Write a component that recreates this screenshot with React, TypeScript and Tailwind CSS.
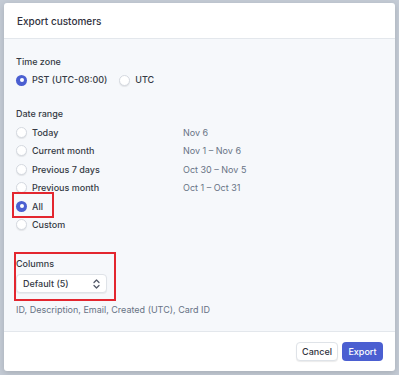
import React from 'react';

const rows = [
  { label: 'Today', range: 'Nov 6' },
  { label: 'Current month', range: 'Nov 1 – Nov 6' },
  { label: 'Previous 7 days', range: 'Oct 30 – Nov 5' },
  { label: 'Previous month', range: 'Oct 1 – Oct 31' },
  { label: 'All', range: '', checked: true, marked: true },
  { label: 'Custom', range: '' },
];

function Radio({ checked }: { checked?: boolean }) {
  return checked ? (
    <span className="block w-[11px] h-[11px] rounded-full bg-[#4b5fd1] flex items-center justify-center shrink-0">
      <span className="block w-[4px] h-[4px] rounded-full bg-white" />
    </span>
  ) : (
    <span className="block w-[11px] h-[11px] rounded-full bg-white border border-[#d5d9e0] shadow-[0_1px_1px_rgba(0,0,0,0.08)] shrink-0" />
  );
}

export default function App() {
  return (
    <div className="w-[399px] h-[375px] bg-[#c4cbd5] pt-[3px] pl-[4px] font-['Inter',sans-serif] text-[#353a44]">
      <div className="w-[391px] h-[368px] bg-white rounded-[3px] overflow-hidden flex flex-col shadow-[0_2px_6px_rgba(0,0,0,0.15)]">
        <div className="h-[36px] shrink-0 flex items-center px-[13px] pt-[2px] border-b border-[#e3e7ec]">
          <h1 className="text-[10px] font-medium text-[#30313d]">Export customers</h1>
        </div>

        <div className="h-[293px] shrink-0 bg-[#f6f8fb] px-[12px] pt-[16px] text-[9px] border-b border-[#e3e7ec]">
          <div className="h-[14px] leading-[14px] font-medium">Time zone</div>
          <div className="mt-[4px] h-[14px] flex items-center">
            <Radio checked />
            <span className="ml-[5px] font-medium">PST (UTC-08:00)</span>
            <span className="ml-[12px]"><Radio /></span>
            <span className="ml-[5px] font-medium">UTC</span>
          </div>

          <div className="mt-[20px] h-[14px] leading-[14px] font-medium">Date range</div>
          <div className="mt-[2px]">
            {rows.map((r) => (
              <div key={r.label} className="h-[18.5px] flex items-center relative">
                <Radio checked={r.checked} />
                <span className="ml-[5px] w-[151px] font-medium">{r.label}</span>
                <span className="text-[#687385]">{r.range}</span>
                {r.marked && (
                  <span className="absolute left-[-4px] top-[-5px] w-[42px] h-[26px] border-2 border-[#e3262f]" />
                )}
              </div>
            ))}
          </div>

          <div className="relative mt-[23px]">
            <div className="h-[14px] leading-[14px] font-medium">Columns</div>
            <div className="mt-[3px] w-[91px] h-[19px] bg-white rounded-[4px] border border-[#dfe3e8] shadow-[0_1px_1px_rgba(0,0,0,0.06)] flex items-center justify-between px-[6px]">
              <span className="font-medium">Default (5)</span>
              <svg width="7" height="10" viewBox="0 0 7 10" fill="none" stroke="#545969" strokeWidth="1.3" strokeLinecap="round" strokeLinejoin="round">
                <path d="M1 3.5 L3.5 1 L6 3.5" />
                <path d="M1 6.5 L3.5 9 L6 6.5" />
              </svg>
            </div>
            <span className="absolute left-[-2px] top-[-5px] w-[102px] h-[49px] border-2 border-[#e3262f]" />
          </div>

          <div className="mt-[10px] h-[14px] leading-[14px] text-[#687385]">ID, Description, Email, Created (UTC), Card ID</div>
        </div>

        <div className="flex-1 flex items-center justify-end gap-[4px] pr-[12px] text-[9px]">
          <button className="h-[19px] w-[42px] bg-white rounded-[4px] border border-[#dfe3e8] shadow-[0_1px_1px_rgba(0,0,0,0.08)] font-medium text-[#30313d]">Cancel</button>
          <button className="h-[19px] w-[41px] bg-[#4b5fd1] rounded-[4px] font-medium text-white">Export</button>
        </div>
      </div>
    </div>
  );
}
